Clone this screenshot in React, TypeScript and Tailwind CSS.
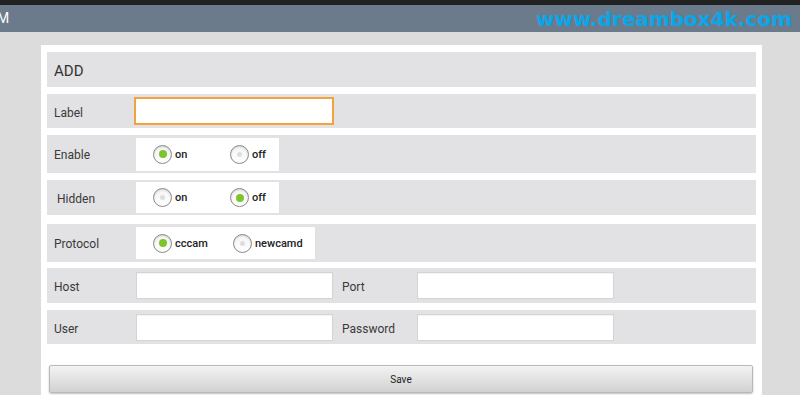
import React from "react";

// radio circle, checked = green dot
function Radio({ checked }: { checked: boolean }) {
  return (
    <span className="flex h-[19px] w-[19px] items-center justify-center rounded-full border border-[#8a8a8a] bg-gradient-to-b from-[#f4f4f4] to-[#ffffff] shadow-[inset_0_1px_2px_rgba(0,0,0,0.15)]">
      {checked ? (
        <span className="h-[8px] w-[8px] rounded-full bg-[#7cc62b]" />
      ) : (
        <span className="h-[5px] w-[5px] rounded-full bg-[#dedede]" />
      )}
    </span>
  );
}

interface OptionProps {
  text: string;
  checked: boolean;
  width?: string;
}

function Option({ text, checked, width }: OptionProps) {
  return (
    <div className={`flex items-center gap-[3px] ${width ?? ""}`}>
      <Radio checked={checked} />
      <span className="pt-[2px] text-[11px] font-medium text-[#222]">{text}</span>
    </div>
  );
}

function TextBox({ width }: { width: string }) {
  return (
    <div
      className={`h-[27px] ${width} border border-[#d4d4d4] bg-white shadow-[inset_0_1px_1px_rgba(0,0,0,0.05)]`}
    />
  );
}

export default function App() {
  return (
    <div
      className="h-[395px] w-[800px] overflow-hidden bg-[#dcdcdc]"
      style={{ fontFamily: "Roboto, 'Liberation Sans', sans-serif" }}
    >
      {/* top bars */}
      <div className="h-[5px] bg-[#222222]" />
      <div className="flex h-[27px] items-center justify-between bg-[#6c7b8b]">
        <span className="-ml-[3px] text-[14px] text-white">M</span>
        <span
          className="mr-[8px] text-[20px] font-bold leading-none text-[#0aa6e8]"
          style={{ fontFamily: "'DejaVu Sans', Verdana, sans-serif" }}
        >
          www.dreambox4k.com
        </span>
      </div>

      {/* panel */}
      <div className="pl-[41px] pt-[13px]">
        <div className="flex w-[721px] flex-col bg-white px-[6px] pt-[7px] pb-[10px] text-[12px] text-[#3a3a3a]">
          <div className="flex h-[35px] items-center bg-[#e2e1e3] pl-[7px] pt-[3px] text-[15px] text-[#333]">
            ADD
          </div>

          <div className="mt-[7px] flex h-[34px] items-center bg-[#e2e1e3]">
            <span className="w-[87px] pl-[7px] pt-[3px]">Label</span>
            <div className="h-[28px] w-[200px] border-2 border-[#f4a23a] bg-white" />
          </div>

          <div className="mt-[7px] flex h-[38px] items-center bg-[#e2e1e3]">
            <span className="w-[89px] pl-[7px] pt-[2px]">Enable</span>
            <div className="flex h-[33px] w-[143px] items-center bg-white pl-[17px]">
              <Option text="on" checked width="w-[77px]" />
              <Option text="off" checked={false} />
            </div>
          </div>

          <div className="mt-[7px] flex h-[35px] items-center bg-[#e2e1e3]">
            <span className="w-[89px] pl-[10px] pt-[2px]">Hidden</span>
            <div className="flex h-[31px] w-[143px] items-center bg-white pl-[17px]">
              <Option text="on" checked={false} width="w-[77px]" />
              <Option text="off" checked />
            </div>
          </div>

          <div className="mt-[9px] flex h-[38px] items-center bg-[#e2e1e3]">
            <span className="w-[89px] pl-[7px] pt-[2px]">Protocol</span>
            <div className="flex h-[32px] w-[179px] items-center bg-white pl-[17px]">
              <Option text="cccam" checked width="w-[80px]" />
              <Option text="newcamd" checked={false} />
            </div>
          </div>

          <div className="mt-[6px] flex h-[35px] items-center bg-[#e2e1e3]">
            <span className="w-[89px] pl-[7px] pt-[2px]">Host</span>
            <TextBox width="w-[197px]" />
            <span className="w-[84px] pl-[9px] pt-[2px]">Port</span>
            <TextBox width="w-[197px]" />
          </div>

          <div className="mt-[7px] flex h-[34px] items-center bg-[#e2e1e3]">
            <span className="w-[89px] pl-[7px] pt-[3px]">User</span>
            <TextBox width="w-[197px]" />
            <span className="w-[84px] pl-[9px] pt-[3px]">Password</span>
            <TextBox width="w-[197px]" />
          </div>

          <button className="mt-[21px] ml-[2px] flex h-[28px] w-[704px] items-center justify-center rounded-[2px] border border-[#b9b9b9] bg-gradient-to-b from-[#f3f3f3] to-[#d2d2d2] text-[10px] text-[#222] shadow-[0_1px_2px_rgba(0,0,0,0.25)]">
            Save
          </button>
        </div>
      </div>
    </div>
  );
}
